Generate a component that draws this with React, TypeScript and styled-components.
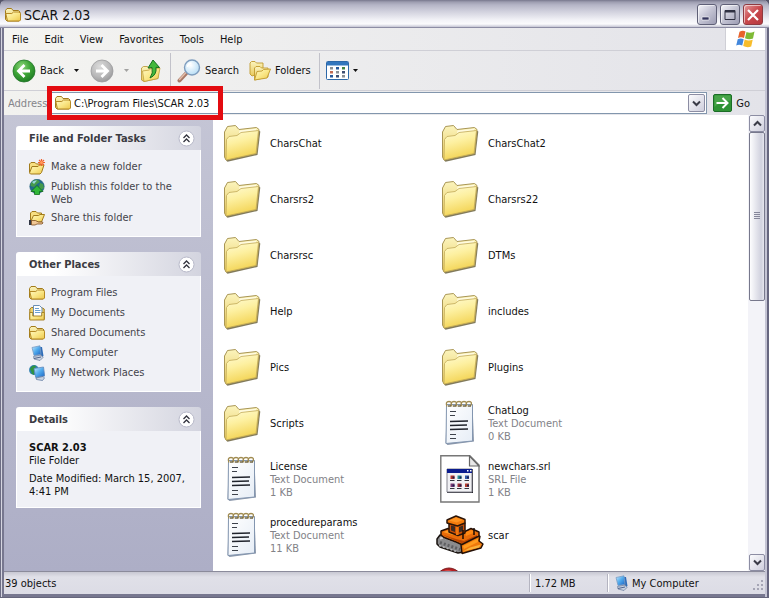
import React from 'react';
import styled, { createGlobalStyle, css } from 'styled-components';

const GlobalStyle = createGlobalStyle`
  * { box-sizing: border-box; }
  body {
    margin: 0;
    background: #55556a;
    font: 11px/13px Tahoma, "DejaVu Sans Condensed", "DejaVu Sans", sans-serif;
    color: #111;
  }
  button, input { font: inherit; color: inherit; }
  button { padding: 0; border: 0; background: none; }
  svg { display: block; flex: none; }
`;

const Window = styled.div`
  position: relative;
  display: flex;
  flex-direction: column;
  height: 100vh;
  overflow: hidden;
  padding: 0 4px 4px;
  border-radius: 6px 6px 0 0;
  background: linear-gradient(90deg, #6d6d84 0 1px, #d5d5e0 1px 2px, #77778f 2px 4px, #77778f calc(100% - 4px), #c4c4d4 calc(100% - 4px) calc(100% - 2px), #66667f calc(100% - 2px));
  box-shadow: inset 0 -1px #66667c;
`;

const TitleBar = styled.header`
  flex: none;
  display: flex;
  align-items: center;
  gap: 3px;
  height: 28px;
  margin: 0 -4px;
  padding: 2px 6px 0 5px;
  border-bottom: 1px solid #8d8da4;
  background: linear-gradient(#77778c 0, #9d9db0 2px, #b5b5c6 5px, #cfcfdc 11px, #f2f2f7 20px, #fbfbfd 24px, #c4c4d3 27px);
`;

const Title = styled.h1`
  flex: 1;
  margin: 0;
  font-size: 14px;
  line-height: 18px;
  font-weight: 400;
`;

const CaptionButton = styled.button<{ $close?: boolean }>`
  display: grid;
  place-items: center;
  width: 20px;
  height: 21px;
  border: 1px solid ${p => (p.$close ? '#8e3a40' : '#5f6077')};
  border-radius: 3px;
  box-shadow: inset 1px 1px #ffffff90;
  background: ${p => (p.$close
    ? 'linear-gradient(135deg, #e39a9b, #c9484c 50%, #b5383d)'
    : 'linear-gradient(135deg, #f4f4f9, #c3c3d3 50%, #9c9cb3)')};
`;

const MenuBar = styled.nav`
  flex: none;
  display: flex;
  align-items: stretch;
  height: 23px;
  padding-left: 8px;
  border-bottom: 1px solid #cfcfd6;
  background: linear-gradient(90deg, #f4f4f1, #e3e3e9);
`;

const MenuItem = styled.button`
  margin-right: 16px;
`;

const LogoBox = styled.div`
  display: grid;
  place-items: center;
  width: 40px;
  margin-left: auto;
  background: #fff;
  border-left: 1px solid #cfcfd6;
`;

const Toolbar = styled.div`
  flex: none;
  display: flex;
  align-items: center;
  height: 40px;
  padding-left: 8px;
  border-bottom: 1px solid #cfcfd6;
  background: linear-gradient(90deg, #f4f4f1, #e3e3e9);
`;

const ToolButton = styled.button<{ $lead?: number }>`
  display: flex;
  align-items: center;
  gap: 4px;
  height: 32px;
  margin-left: ${p => p.$lead ?? 0}px;
`;

const DropButton = styled.button<{ $wide?: boolean; $faded?: boolean }>`
  display: grid;
  place-items: center;
  width: ${p => (p.$wide ? '24px' : '12px')};
  height: 32px;
  opacity: ${p => (p.$faded ? 0.35 : 1)};
`;

const Divider = styled.span`
  width: 1px;
  height: 36px;
  margin: 0 6px 0 8px;
  background: #c2c2ca;
`;

const AddressBar = styled.form`
  flex: none;
  display: flex;
  align-items: center;
  height: 24px;
  padding-left: 4px;
  background: linear-gradient(90deg, #f2f2ef, #e3e3e9);
`;

const AddressLabel = styled.label`
  width: 42px;
  overflow: hidden;
  color: #85858a;
`;

const Combo = styled.div`
  position: relative;
  flex: 1;
  display: flex;
  align-items: center;
  gap: 3px;
  height: 22px;
  padding: 1px 1px 1px 4px;
  border: 1px solid #8296ad;
  background: #fff;
`;

const AddressInput = styled.input`
  flex: 1;
  min-width: 0;
  padding: 0;
  border: 0;
  outline: 0;
  background: transparent;
`;

const Highlight = styled.span`
  position: absolute;
  left: -4px;
  top: -7px;
  width: 176px;
  height: 34px;
  border: 5px solid #e30b10;
  z-index: 2;
  pointer-events: none;
`;

const buttonFace = css`
  display: grid;
  place-items: center;
  border: 1px solid #8c8da3;
  border-radius: 2px;
  background: linear-gradient(135deg, #fbfbfd, #cfcfdd);
`;

const ComboButton = styled.button`
  ${buttonFace}
  width: 17px;
  height: 18px;
`;

const GoButton = styled.button`
  display: flex;
  align-items: center;
  gap: 4px;
  margin: 0 15px 0 6px;
`;

const Body = styled.div`
  flex: 1;
  min-height: 0;
  display: flex;
`;

const Sidebar = styled.aside`
  flex: none;
  display: flex;
  flex-direction: column;
  gap: 15px;
  width: 209px;
  padding: 11px 12px;
  background: linear-gradient(#c4c5d5, #adaec6);
`;

const Panel = styled.section`
  border-radius: 3px 3px 0 0;
  overflow: hidden;
`;

const PanelHead = styled.div`
  display: flex;
  align-items: center;
  justify-content: space-between;
  height: 24px;
  padding: 0 6px 0 13px;
  background: linear-gradient(90deg, #fff 20%, #d3d4df);
`;

const PanelTitle = styled.h2`
  margin: 0;
  font-size: 11px;
  line-height: 13px;
  color: #3b3b42;
`;

const PanelBody = styled.ul`
  display: flex;
  flex-direction: column;
  gap: 4px;
  margin: 0;
  padding: 9px 12px 10px;
  list-style: none;
  border: 1px solid #fff;
  border-top: 0;
  background: #f0f1f6;
`;

const TaskLink = styled.a`
  display: flex;
  gap: 6px;
  min-height: 16px;
  color: #44444b;
  text-decoration: none;
`;

const TaskText = styled.span`
  padding-top: 1px;
`;

const Details = styled.div`
  padding: 10px 12px 9px;
  border: 1px solid #fff;
  border-top: 0;
  background: #f0f1f6;
`;

const DetailLine = styled.p<{ $spaced?: boolean }>`
  margin: ${p => (p.$spaced ? '5px' : '0')} 0 0;
`;

const Files = styled.ul`
  flex: 1;
  min-width: 0;
  display: grid;
  grid-template-columns: repeat(auto-fill, 218px);
  grid-auto-rows: 56px;
  align-content: start;
  margin: 0;
  padding: 0;
  overflow: hidden;
  list-style: none;
  background: #fff;
`;

const FileButton = styled.button`
  display: flex;
  align-items: center;
  gap: 4px;
  height: 56px;
  padding-left: 5px;
  text-align: left;
`;

const IconSlot = styled.span`
  display: grid;
  place-items: center;
  width: 48px;
  height: 48px;
`;

const FileMeta = styled.span`
  display: block;
  color: #828287;
`;

const ScrollBar = styled.div`
  flex: none;
  display: flex;
  flex-direction: column;
  width: 17px;
  padding-left: 1px;
  background: #f3f3f8;
`;

const ScrollButton = styled.button`
  ${buttonFace}
  width: 16px;
  height: 17px;
`;

const Track = styled.div`
  flex: 1;
`;

const Thumb = styled.div`
  display: grid;
  place-items: center;
  height: 40%;
  border: 1px solid #77788c;
  border-radius: 2px;
  background: linear-gradient(90deg, #fdfdfe, #d0d1de 80%, #e6e6ee);
`;

const StatusBar = styled.footer`
  flex: none;
  display: flex;
  align-items: center;
  height: 23px;
  border-top: 1px solid #8b8b9b;
  background: linear-gradient(#c8c8d2, #e0e0e8 5px, #dcdce5);
`;

const StatusCell = styled.div<{ $width?: number }>`
  display: flex;
  align-items: center;
  gap: 3px;
  height: 18px;
  padding-left: ${p => (p.$width ? '5px' : '1px')};
  ${p => (p.$width
    ? css`width: ${p.$width}px; border-left: 1px solid #b4b4c0; box-shadow: inset 1px 0 #fff;`
    : css`flex: 1;`)}
`;

const Grip = styled.span`
  align-self: flex-end;
  margin: 0 1px 1px auto;
`;

const Defs = styled.svg`
  position: absolute;
`;

/* ---------- icons ---------- */

const Gradients = () => (
  <Defs width="0" height="0" aria-hidden="true">
    <defs>
      <linearGradient id="folder" x1="0" y1="0" x2="1" y2="1">
        <stop offset="0" stopColor="#fff9c4" /><stop offset=".5" stopColor="#fae788" /><stop offset="1" stopColor="#edc84c" />
      </linearGradient>
      <linearGradient id="bigFolder" x1="0" y1="0" x2=".3" y2="1">
        <stop offset="0" stopColor="#fffbd4" /><stop offset=".45" stopColor="#fdf0a0" /><stop offset="1" stopColor="#f3d455" />
      </linearGradient>
      <linearGradient id="folderBack" x1="0" y1="0" x2="0" y2="1">
        <stop offset="0" stopColor="#fbf4bd" /><stop offset="1" stopColor="#e8c95c" />
      </linearGradient>
      <radialGradient id="green" cx=".4" cy=".3" r=".75">
        <stop offset="0" stopColor="#8ed67c" /><stop offset=".5" stopColor="#3fa638" /><stop offset="1" stopColor="#1c7a22" />
      </radialGradient>
      <radialGradient id="grey" cx=".4" cy=".3" r=".75">
        <stop offset="0" stopColor="#dcdcdc" /><stop offset=".6" stopColor="#b9b9ba" /><stop offset="1" stopColor="#969698" />
      </radialGradient>
      <radialGradient id="lens" cx=".4" cy=".35" r=".7">
        <stop offset="0" stopColor="#fff" /><stop offset="1" stopColor="#b4dcf5" />
      </radialGradient>
      <linearGradient id="screen" x1="0" y1="0" x2="1" y2="1">
        <stop offset="0" stopColor="#c5ecff" /><stop offset=".5" stopColor="#4fa9ec" /><stop offset="1" stopColor="#1b62c4" />
      </linearGradient>
      <linearGradient id="paper" x1="0" y1="0" x2="1" y2="1">
        <stop offset="0" stopColor="#fff" /><stop offset="1" stopColor="#e6edf6" />
      </linearGradient>
    </defs>
  </Defs>
);

const SmallFolder = () => (
  <svg width="16" height="16" viewBox="0 0 16 16">
    <path d="M.5 12.500V3.500L2 1.500h4.500L8 3.500h5.500L15 5v8l-1 1H2z" fill="url(#folderBack)" stroke="#a27b1b" />
    <path d="M2.500 14 .8 6.500h6L8.500 5h5.500l1.500 1.500v6.500l-1 1z" fill="url(#folder)" stroke="#b68a25" />
  </svg>
);

const NewFolder = () => (
  <svg width="16" height="16" viewBox="0 0 16 16">
    <path d="M.5 13V5L2 3.500h4L7.500 5h5v2" fill="#f7df82" stroke="#a27b1b" />
    <path d="M.5 14 3 7.500h6L10.500 6h4.500L12.500 13.500 11 15H1.500z" fill="url(#folder)" stroke="#a27b1b" />
    <path d="M12.500 0v7M9 3.500h7M10 1l5 5M15 1l-5 5" stroke="#f0602c" strokeWidth="1.200" />
    <circle cx="12.500" cy="3.500" r="1.500" fill="#ff9a5a" />
  </svg>
);

const Globe = () => (
  <svg width="16" height="16" viewBox="0 0 16 16">
    <circle cx="8" cy="7.500" r="7.200" fill="#226a8c" stroke="#1d5b76" strokeWidth=".6" />
    <path d="M2 4Q5 0 9 1l2 2-3 2-3 3-3.500-1zM11 4l3 1 1 4-3 2-2-3z" fill="#459a4b" />
    <path d="M3 3Q5 1 8 1.500L5 5z" fill="#9bd6e0" />
    <path d="M8 6.500 14 12.500h-3.500v3h-5v-3H2z" fill="#30b738" stroke="#11701c" strokeWidth=".8" />
  </svg>
);

const ShareFolder = () => (
  <svg width="16" height="16" viewBox="0 0 16 16">
    <path d="M1.500 11V3L3 1.500h4L8.500 3h4v3" fill="#f7df82" stroke="#a27b1b" />
    <path d="M2 11 4.500 5.500h5L11 4.500h4.500L12.500 12H3z" fill="url(#folder)" stroke="#a27b1b" />
    <path d="M0 10h2.500v5H0z" fill="#303644" />
    <path d="M2.500 10.500h4l3 1.500h4l.5 1-1 1H8l-2 1H2.500z" fill="#f0c795" stroke="#7c4d20" strokeWidth=".8" />
  </svg>
);

const DocsFolder = () => (
  <svg width="16" height="16" viewBox="0 0 16 16">
    <path d="M.8 14V4L2.500 2.500h10L15.200 4v10z" fill="#efd16c" stroke="#a27b1b" />
    <path d="M4.500.5h6l2.500 2.500v9h-8.500z" fill="#fff" stroke="#6b8fb5" />
    <path d="M6 3.500h4M6 5.500h5.500M6 7.500h5.500" stroke="#6ba0d2" />
    <path d="M.8 15V7.500h3v3.500h9V7.500h2.400V15z" fill="url(#folder)" stroke="#a27b1b" strokeWidth=".9" />
  </svg>
);

const Computer = () => (
  <svg width="16" height="16" viewBox="0 0 16 16">
    <path d="M10 2h3l1.500 9-3 2z" fill="#2f6cb8" />
    <path d="M3 2.500 11 .8l1 8.700-7 1z" fill="url(#screen)" stroke="#7a9cc4" strokeWidth=".8" />
    <path d="M4.500 11.500 12 10l2 2.500-3 3-6-1.500z" fill="#c9d3e2" stroke="#66799a" strokeWidth=".7" />
    <path d="M5 13.500 12 12" stroke="#51648c" />
  </svg>
);

const Network = () => (
  <svg width="16" height="16" viewBox="0 0 16 16">
    <circle cx="5" cy="5" r="4.900" fill="#2c7fae" />
    <path d="M1 4Q3 0 6 .5L7 2 5 4l1 2-3 2zM2 8l3-1v3z" fill="#2f9440" />
    <path d="M5 3.500 14.500 2l1.200 9-9 1.500z" fill="url(#screen)" stroke="#6289bb" strokeWidth=".8" />
    <path d="M7 13 14 11.500l1.500 1.500-2 2.500-6-1z" fill="#c9d3e2" stroke="#56719b" strokeWidth=".7" />
  </svg>
);

const Caret = () => <svg width="5" height="3" viewBox="0 0 5 3"><path d="M0 0h5L2.500 3z" fill="#111" /></svg>;

const RoundArrow = ({ back }: { back?: boolean }) => (
  <svg width="24" height="24" viewBox="0 0 24 24">
    <circle cx="12" cy="12" r="11" fill={back ? 'url(#green)' : 'url(#grey)'} stroke={back ? '#23762a' : '#9c9c9e'} strokeWidth=".8" />
    <path d={back ? 'M12.500 6 6.500 12l6 6M7 12h11' : 'M11.500 6l6 6-6 6M17 12H6'} fill="none" stroke="#fff" strokeWidth="2.800" />
  </svg>
);

const UpFolder = () => (
  <svg width="22" height="24" viewBox="0 0 22 24">
    <path d="M1.500 21V9l2-1.500h4L9 9.500l9-1v11L4 22.500z" fill="url(#folderBack)" stroke="#b5922e" strokeWidth=".8" />
    <path d="M4 22.500 2.500 12l7-1 1.500-1.500 9-.5-2 10.500z" fill="url(#folder)" stroke="#c2a03a" strokeWidth=".8" />
    <path d="M13 1 19.500 8.500l-3.500-.2Q17 16 10 19q3.500-5 2-10.500L8 9z" fill="#43b83b" stroke="#17701d" />
  </svg>
);

const SearchIcon = () => (
  <svg width="24" height="24" viewBox="0 0 24 24">
    <path d="M9.500 14 2.500 21.500" stroke="#a87866" strokeWidth="4" strokeLinecap="round" />
    <path d="M9 13.500 2.500 20.500" stroke="#e3bda9" strokeWidth="1.500" strokeLinecap="round" />
    <circle cx="15" cy="8.500" r="7.500" fill="url(#lens)" stroke="#7e9dbe" strokeWidth="1.400" />
    <path d="M10.500 8Q11 4.500 14.500 4" stroke="#fff" strokeWidth="1.500" fill="none" />
  </svg>
);

const FoldersIcon = () => (
  <svg width="22" height="22" viewBox="0 0 22 22">
    <path d="M1 14V3l1.500-1.500H6L7.500 3H14v9L3 16z" fill="url(#folderBack)" stroke="#c19a2c" strokeWidth=".9" />
    <path d="M5.500 20V8L7 6.500h4L12.500 8H19v9z" fill="url(#folderBack)" stroke="#c19a2c" strokeWidth=".9" />
    <path d="M5.500 20 8 11.500l5-.5 1.500-1.500 7-.5-3.500 9z" fill="url(#folder)" stroke="#c19a2c" strokeWidth=".9" />
  </svg>
);

const ViewsIcon = () => (
  <svg width="24" height="20" viewBox="0 0 24 20">
    <rect x=".5" y=".5" width="22" height="18" rx="1" fill="#fff" stroke="#2c68a8" />
    <path d="M1 1h21v3.500H1z" fill="#3276bd" />
    <path d="M4 6h3v2.500H4zM10 10h3v2.500h-3zM16 14h3v2.500h-3z" fill="#8a8f94" />
    <path d="M10 6h3v2.500h-3zM4 14h3v2.500H4z" fill="#27599a" />
    <path d="M16 6h3v2.500h-3z" fill="#428343" />
    <path d="M4 10h3v2.500H4z" fill="#c36b53" />
    <path d="M16 10h3v2.500h-3zM10 14h3v2.500h-3z" fill="#3d4f74" />
  </svg>
);

const WindowsLogo = () => (
  <svg width="20" height="18" viewBox="0 0 20 18">
    <path d="M3.500 1.800Q6.500 0 9.500 1.500L8 8Q5 6.500 2 8z" fill="#e8632c" />
    <path d="M10.500 2Q14 3.600 18.500 1.500L17 8.500Q13 10 9 8.300z" fill="#7fba35" />
    <path d="M1.700 9.200Q4.700 7.700 7.700 9.200L6.200 15.500Q3.200 14 .2 15.500z" fill="#4287dc" />
    <path d="M8.700 9.600Q12.500 11.300 16.700 9.800L15.200 16.500Q11 18 7.200 16z" fill="#f8bd2b" />
  </svg>
);

const GoIcon = () => (
  <svg width="19" height="18" viewBox="0 0 19 18">
    <rect x=".5" y=".5" width="18" height="17" rx="1.500" fill="#2f9335" stroke="#1b6d27" />
    <path d="M1.500 1.500h16v5Q8 7 1.500 13z" fill="#67bb62" opacity=".45" />
    <path d="M3.500 9H14M9.500 4l5 5-5 5" fill="none" stroke="#fff" strokeWidth="2" />
  </svg>
);

const Chevron = ({ up }: { up?: boolean }) => (
  <svg width="9" height="7" viewBox="0 0 9 7">
    <path d={up ? 'M1 5.500 4.500 2 8 5.500' : 'M1 1.500 4.500 5 8 1.500'} fill="none" stroke="#3a3b47" strokeWidth="2" />
  </svg>
);

const Collapse = () => (
  <svg width="17" height="17" viewBox="0 0 17 17">
    <circle cx="8.500" cy="8.500" r="7.500" fill="#fff" stroke="#b7b8c8" />
    <path d="M5.500 8 8.500 5l3 3M5.500 12l3-3 3 3" fill="none" stroke="#33343e" strokeWidth="1.300" />
  </svg>
);

const BigFolder = () => (
  <svg width="38" height="38" viewBox="0 0 38 38">
    <path d="M3 36.500 4.500 37.800 34.500 31 37.300 7.500 35 6z" fill="#6b6340" opacity=".85" />
    <path d="M1.500 33V8L4.500 2.500 12.500 1.500 16 5.500 33.500 3.500 36 5.500 33.500 29.500 3 36z" fill="url(#folderBack)" stroke="#a99655" />
    <path d="M16.500 6.500 33 4.800V8l-17 2z" fill="#fffbe0" />
    <path d="M3 36 3.500 15.500 6 12.500 14 11.500 18 8.500 35.500 6.500 33 29.500z" fill="url(#bigFolder)" stroke="#c2a957" strokeWidth=".8" />
  </svg>
);

const Notepad = () => (
  <svg width="34" height="46" viewBox="0 0 34 46">
    <path d="M4 4.500h25.500l1.500 37L4.500 45 2.500 43z" fill="#8b97aa" />
    <path d="M3.500 4.500h26v36.500L3 43.500z" fill="url(#paper)" stroke="#8396b0" />
    {[4, 9, 14, 19, 24].map(x => (
      <g key={x}>
        <path d={`M${x} 6.500q-2-5 2-5t1.500 4.500`} fill="none" stroke="#a08b50" strokeWidth="1.300" />
        <path d={`M${x + 1} 6h3`} stroke="#6f6443" strokeWidth="1.500" />
      </g>
    ))}
    <path d="M7 11.500h6M7 15.500h5M7 34.500h6M7 38.500h6" stroke="#3e434c" strokeWidth="1.200" />
    <path d="M7 21.500l18-.5M7 25.500l17-.5M7 29.500l18-.5" stroke="#20242c" strokeWidth="1.300" />
  </svg>
);

const SrlFile = () => (
  <svg width="40" height="48" viewBox="0 0 40 48">
    <path d="M.8.8h29L39 10v37H.8z" fill="#fff" stroke="#777" strokeWidth="1.400" />
    <path d="M29.500 1v10H39z" fill="#e8e8e8" stroke="#666" strokeWidth="1.200" />
    <path d="M7 14h26v24H7z" fill="#26262e" />
    <path d="M7 14h25v23H7z" fill="#f1f1f4" stroke="#84848e" />
    <path d="M7 14h25v4H7z" fill="#0a1c8e" />
    <path d="M27 15h1.500v1.500H27zM30 15h1.500v1.500H30z" fill="#fff" />
    {[20.500, 28.500].map((y, r) => [10.500, 17.500, 25].map((x, c) => (
      <g key={`${x}-${y}`}>
        <rect x={x} y={y} width="4" height="3.500" fill={[['#b3362e', '#269199', '#3159a8'], ['#7b3a75', '#9c2d36', '#b33c2d']][r][c]} />
        <rect x={x + 2} y={y + 1} width="2" height="2" fill="#1c1f4c" />
        <path d={`M${x - 0.5} ${y + 5}h4.500`} stroke="#34343d" />
      </g>
    )))}
  </svg>
);

const Bulldozer = () => (
  <svg width="48" height="40" viewBox="0 0 48 40">
    <g strokeLinejoin="bevel">
      <path d="M1 24 4 20H9L27 27V37L22 38 4 32 1 29z" fill="#8b8b8d" stroke="#18120e" strokeWidth="1.500" />
      <path d="M4 23.500 8 22.500 26 29" fill="none" stroke="#d0d0d2" strokeWidth="2" strokeDasharray="3 1" />
      <path d="M4 27.500 24 34.500" fill="none" stroke="#5f5f62" strokeWidth="3" strokeDasharray="2 2" />
      <path d="M3 30.500 22 37" fill="none" stroke="#b2b2b4" strokeWidth="1.500" strokeDasharray="2 2" />
      <path d="M5 20V16L12 13.500 28 17 35 13.500 43 17V25L29 31 20 27 8 22.500z" fill="#e96c09" stroke="#241006" strokeWidth="1.500" />
      <path d="M6 19.500 20 24 28 26 41 20V24L29 29.500 20 26z" fill="#b94604" />
      <path d="M7 17 13 15 22 18 17 20z" fill="#ff9c25" />
      <path d="M29 17.500 35 15 40 17 30 21z" fill="#ff8a15" />
      <path d="M13 8H29V18L22 20.500 13 17z" fill="#c84e06" stroke="#2b1408" strokeWidth="1.500" />
      <path d="M15 10.500 19 11.500V17L15 15.500zM23 12 27 10.500V16L23 17.500z" fill="#3b2b22" />
      <path d="M20 11h2.500v9H20z" fill="#ef760d" />
      <path d="M11 5 20 1 29 4.500V8L21.500 11 11 8z" fill="#f27b0d" stroke="#2b1408" strokeWidth="1.500" />
      <path d="M13 5.500 20 2.500 27 5 20.500 7.500z" fill="#ff9422" />
      <path d="M27 15v9M38 13v7" stroke="#1c0c05" strokeWidth="1.500" />
      <path d="M25 30 33 26 41 22 44 21 43 26 47 29 45 33 38 35 26 38.500z" fill="#ee780b" stroke="#241006" strokeWidth="1.500" />
      <path d="M27 31 42 23.500V27L28 34z" fill="#ff9b1e" />
      <path d="M27 36.500 34 32.500 45 29.500 43 32.500z" fill="#f9b13b" />
    </g>
  </svg>
);

const FaintDoc = () => (
  <svg width="38" height="44" viewBox="0 0 38 44"><path d="M22 5h10v34H6V7h16z" fill="#fff" stroke="#bbb" /></svg>
);

const RedBall = () => (
  <svg width="48" height="48" viewBox="0 0 48 48">
    <ellipse cx="13" cy="24" rx="17" ry="23" fill="#b51f22" stroke="#7c1c1e" />
    <ellipse cx="12" cy="12" rx="9" ry="9" fill="#d84a4a" />
  </svg>
);

/* ---------- data ---------- */

type FileEntry = { name: string; icon: React.FC; kind?: string; size?: string };

const files: FileEntry[] = [
  ...['CharsChat', 'CharsChat2', 'Charsrs2', 'Charsrs22', 'Charsrsc', 'DTMs', 'Help', 'includes', 'Pics', 'Plugins', 'Scripts']
    .map(name => ({ name, icon: BigFolder })),
  { name: 'ChatLog', icon: Notepad, kind: 'Text Document', size: '0 KB' },
  { name: 'License', icon: Notepad, kind: 'Text Document', size: '1 KB' },
  { name: 'newchars.srl', icon: SrlFile, kind: 'SRL File', size: '1 KB' },
  { name: 'procedureparams', icon: Notepad, kind: 'Text Document', size: '11 KB' },
  { name: 'scar', icon: Bulldozer },
  { name: '', icon: FaintDoc },
  { name: '', icon: RedBall },
];

const panels = [
  {
    title: 'File and Folder Tasks',
    links: [
      { text: 'Make a new folder', icon: NewFolder },
      { text: 'Publish this folder to the Web', icon: Globe },
      { text: 'Share this folder', icon: ShareFolder },
    ],
  },
  {
    title: 'Other Places',
    links: [
      { text: 'Program Files', icon: SmallFolder },
      { text: 'My Documents', icon: DocsFolder },
      { text: 'Shared Documents', icon: SmallFolder },
      { text: 'My Computer', icon: Computer },
      { text: 'My Network Places', icon: Network },
    ],
  },
];

const PanelHeader = ({ title }: { title: string }) => (
  <PanelHead>
    <PanelTitle>{title}</PanelTitle>
    <button type="button" aria-label={`Collapse ${title}`}><Collapse /></button>
  </PanelHead>
);

export default function App() {
  return (
    <Window>
      <GlobalStyle />
      <Gradients />
      <TitleBar>
        <SmallFolder />
        <Title>SCAR 2.03</Title>
        <CaptionButton aria-label="Minimize">
          <svg width="12" height="12" viewBox="0 0 12 12"><path d="M1 8h7v3H1z" fill="#33345c" stroke="#fff" strokeWidth=".6" /></svg>
        </CaptionButton>
        <CaptionButton aria-label="Maximize">
          <svg width="12" height="12" viewBox="0 0 12 12"><path d="M1 1.500h10v9H1z" fill="none" stroke="#2f3042" /><path d="M1 2.500h10" stroke="#2f3042" strokeWidth="2" /></svg>
        </CaptionButton>
        <CaptionButton $close aria-label="Close">
          <svg width="12" height="12" viewBox="0 0 12 12"><path d="M1 1l10 10M11 1 1 11" stroke="#fff" strokeWidth="2.200" /></svg>
        </CaptionButton>
      </TitleBar>

      <MenuBar>
        {['File', 'Edit', 'View', 'Favorites', 'Tools', 'Help'].map(m => <MenuItem key={m}>{m}</MenuItem>)}
        <LogoBox><WindowsLogo /></LogoBox>
      </MenuBar>

      <Toolbar>
        <ToolButton><RoundArrow back />Back</ToolButton>
        <DropButton $wide aria-label="Back history"><Caret /></DropButton>
        <ToolButton $lead={2} aria-label="Forward"><RoundArrow /></ToolButton>
        <DropButton $wide $faded aria-label="Forward history"><Caret /></DropButton>
        <ToolButton $lead={2} aria-label="Up"><UpFolder /></ToolButton>
        <Divider />
        <ToolButton><SearchIcon />Search</ToolButton>
        <ToolButton $lead={10}><FoldersIcon />Folders</ToolButton>
        <Divider />
        <ToolButton aria-label="Views"><ViewsIcon /></ToolButton>
        <DropButton aria-label="View options"><Caret /></DropButton>
      </Toolbar>

      <AddressBar onSubmit={e => e.preventDefault()}>
        <AddressLabel htmlFor="address">Address</AddressLabel>
        <Combo>
          <SmallFolder />
          <AddressInput id="address" defaultValue={'C:\\Program Files\\SCAR 2.03'} />
          <ComboButton type="button" aria-label="Show addresses"><Chevron /></ComboButton>
          <Highlight />
        </Combo>
        <GoButton type="submit"><GoIcon />Go</GoButton>
      </AddressBar>

      <Body>
        <Sidebar>
          {panels.map(p => (
            <Panel key={p.title}>
              <PanelHeader title={p.title} />
              <PanelBody>
                {p.links.map(({ text, icon: Icon }) => (
                  <li key={text}><TaskLink href="#"><Icon /><TaskText>{text}</TaskText></TaskLink></li>
                ))}
              </PanelBody>
            </Panel>
          ))}
          <Panel>
            <PanelHeader title="Details" />
            <Details>
              <DetailLine><b>SCAR 2.03</b></DetailLine>
              <DetailLine>File Folder</DetailLine>
              <DetailLine $spaced>Date Modified: March 15, 2007, 4:41 PM</DetailLine>
            </Details>
          </Panel>
        </Sidebar>

        <Files>
          {files.map(({ name, icon: Icon, kind, size }, i) => (
            <li key={i}>
              <FileButton>
                <IconSlot><Icon /></IconSlot>
                <span>
                  {name}
                  {kind && <FileMeta>{kind}</FileMeta>}
                  {size && <FileMeta>{size}</FileMeta>}
                </span>
              </FileButton>
            </li>
          ))}
        </Files>

        <ScrollBar>
          <ScrollButton aria-label="Scroll up"><Chevron up /></ScrollButton>
          <Track>
            <Thumb>
              <svg width="6" height="8" viewBox="0 0 6 8"><path d="M0 .5h6M0 2.500h6M0 4.500h6M0 6.500h6" stroke="#85869a" /></svg>
            </Thumb>
          </Track>
          <ScrollButton aria-label="Scroll down"><Chevron /></ScrollButton>
        </ScrollBar>
      </Body>

      <StatusBar>
        <StatusCell>39 objects</StatusCell>
        <StatusCell $width={78}>1.72 MB</StatusCell>
        <StatusCell $width={158}>
          <Computer />My Computer
          <Grip>
            <svg width="12" height="12" viewBox="0 0 12 12">
              <path d="M9 1h2v2H9zM5 5h2v2H5zM9 5h2v2H9zM1 9h2v2H1zM5 9h2v2H5zM9 9h2v2H9z" fill="#a5a5b5" />
            </svg>
          </Grip>
        </StatusCell>
      </StatusBar>
    </Window>
  );
}
